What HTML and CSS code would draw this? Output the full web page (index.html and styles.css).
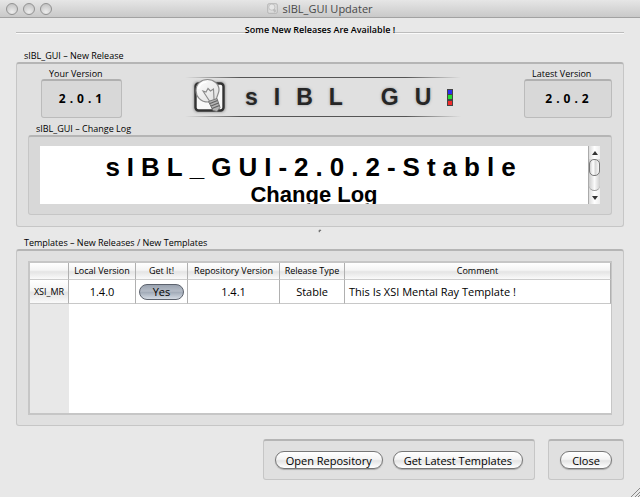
FILE: index.html
```html
<!DOCTYPE html>
<html lang="en">
<head>
<meta charset="utf-8">
<title>sIBL_GUI Updater</title>
<link rel="stylesheet" href="styles.css">
</head>
<body>
<div class="window">
  <header class="titlebar">
    <div class="lights">
      <button class="light" type="button" aria-label="Close window"></button>
      <button class="light" type="button" aria-label="Minimize window"></button>
      <button class="light" type="button" aria-label="Zoom window"></button>
    </div>
    <h1 class="title">
      <svg class="title-icon" viewBox="0 0 32 32" aria-hidden="true">
        <rect x="2" y="2" width="28" height="28" rx="4" fill="#dcdcdc" stroke="#b0b0b0" stroke-width="2.5"/>
        <circle cx="14" cy="12" r="9" fill="#e6e6e6" stroke="#b4b4b4" stroke-width="2"/>
        <path d="M17 20l6-4 4 8-5 4z" fill="#bcbcbc"/>
      </svg>
      <span>sIBL_GUI Updater</span>
    </h1>
  </header>

  <main class="content">
    <div class="notice"><span class="rule"></span><strong class="notice-text">Some New Releases Are Available !</strong><span class="rule"></span></div>

    <section class="group release">
      <h2 class="group-label">sIBL_GUI – New Release</h2>
      <div class="panel release-panel">
        <div class="banner-row">
          <div class="version">
            <div class="version-label">Your Version</div>
            <output class="version-box">2.0.1</output>
          </div>
          <div class="logo">
            <svg class="bulb" viewBox="0 0 38 38" aria-hidden="true">
              <defs>
                <linearGradient id="glass" x1="0" y1="0" x2="1" y2="1">
                  <stop offset="0" stop-color="#fff"/><stop offset="1" stop-color="#dedede"/>
                </linearGradient>
                <filter id="glow" x="-20%" y="-20%" width="140%" height="140%"><feGaussianBlur stdDeviation="1.5"/></filter>
              </defs>
              <rect x="3" y="4" width="31" height="30" rx="4" fill="#888" filter="url(#glow)"/>
              <rect x="4.500" y="5.500" width="28" height="27" rx="3" fill="#f8f8f8" stroke="#333" stroke-width="2.400"/>
              <path d="M17.500 24C9 24 5 18 5 12.500 5 6 10 1.500 16.500 1.500S28 6 28 12c0 4-2.500 6-2.500 9.500z" fill="url(#glass)" stroke="#8c8c8c" stroke-width="1.200"/>
              <path d="M7.500 11c1-4 4-7 8-7" fill="none" stroke="#fff" stroke-width="1.500"/>
              <path d="M18.500 23L12 13l3 1 2-3.500 2.500 2.500 3-2 .5 10" fill="none" stroke="#8a8a8a" stroke-width="1.100"/>
              <path d="M17.500 23.500l8.500-3 3 9-3 4-4-1z" fill="#b4b4b4" stroke="#777"/>
              <path d="M19 25.500l7.500-3M20 28l7.500-3M21 30.500l7.500-3" stroke="#606060" stroke-width="1.100"/>
            </svg>
            <span class="logo-text">sIBL GU</span>
            <svg class="rgb" viewBox="0 0 6 17" aria-hidden="true">
              <rect width="6" height="17" fill="#444"/>
              <rect x="1" y="1" width="4" height="4" fill="#2c2cf0"/>
              <rect x="1" y="6" width="4" height="4" fill="#25dc35"/>
              <rect x="1" y="12" width="4" height="4" fill="#f02c2c"/>
            </svg>
          </div>
          <div class="version version-latest">
            <div class="version-label">Latest Version</div>
            <output class="version-box">2.0.2</output>
          </div>
        </div>
        <h2 class="group-label">sIBL_GUI – Change Log</h2>
        <div class="panel log-panel">
          <div class="log">
            <article class="log-view" tabindex="0">
              <h3 class="log-title">sIBL_GUI-2.0.2-Stable</h3>
              <h4 class="log-subtitle">Change Log</h4>
            </article>
            <div class="scrollbar" aria-hidden="true">
              <span class="arrow arrow-up"></span>
              <span class="track"><span class="thumb"></span></span>
              <span class="arrow arrow-down"></span>
            </div>
          </div>
        </div>
      </div>
    </section>

    <div class="splitter"><svg class="grip" viewBox="0 0 4 4" aria-hidden="true"><circle cx="2" cy="2" r="1.500" fill="#777"/><path d="M2 4a2 2 0 0 1 2-2" stroke="#fff" fill="none"/></svg></div>

    <section class="group templates">
      <h2 class="group-label">Templates – New Releases / New Templates</h2>
      <div class="panel table-panel">
        <div class="table-frame">
          <table class="grid">
            <colgroup><col class="c-name"><col class="c-local"><col class="c-get"><col class="c-repo"><col class="c-type"><col></colgroup>
            <thead>
              <tr><td></td><th scope="col">Local Version</th><th scope="col">Get It!</th><th scope="col">Repository Version</th><th scope="col">Release Type</th><th scope="col">Comment</th></tr>
            </thead>
            <tbody>
              <tr><th scope="row">XSI_MR</th><td>1.4.0</td><td class="get"><button class="toggle" type="button" aria-pressed="true">Yes</button></td><td>1.4.1</td><td>Stable</td><td class="comment">This Is XSI Mental Ray Template !</td></tr>
            </tbody>
          </table>
          <div class="table-rest"><span class="gutter"></span></div>
        </div>
      </div>
    </section>

    <footer class="actions">
      <div class="panel action-panel">
        <button class="push" type="button">Open Repository</button>
        <button class="push" type="button">Get Latest Templates</button>
      </div>
      <div class="panel action-panel">
        <button class="push" type="button">Close</button>
      </div>
    </footer>
  </main>
  <svg class="resize" viewBox="0 0 10 10" aria-hidden="true"><path d="M1 10L10 1M5 10l5-5M8 10l2-2" stroke="#888" fill="none"/></svg>
</div>
</body>
</html>
```
FILE: styles.css
```css
* { box-sizing: border-box; }
body {
  margin: 0;
  background: #e8e8e8;
  color: #000;
  font: 9px/12px "Open Sans", "Noto Sans", sans-serif;
  font-weight: 500;
}
h1, h2, h3, h4 { margin: 0; font: inherit; }
button { font: inherit; color: inherit; margin: 0; }

.window { position: relative; display: flex; flex-direction: column; min-height: 100vh; }
.titlebar {
  position: relative;
  display: flex;
  align-items: center;
  justify-content: center;
  height: 18px;
  border-bottom: 1px solid #a2a2a2;
  background: linear-gradient(#e6e6e6, #c9c9c9);
}
.lights { position: absolute; left: 6px; top: 3px; display: flex; gap: 5px; }
.light {
  width: 12px;
  height: 12px;
  padding: 0;
  border: 1px solid #929292;
  border-radius: 50%;
  background: radial-gradient(circle at 50% 80%, #ededed, #bcbcbc);
}
.title { display: flex; align-items: center; gap: 4px; color: #484848; font-size: 11px; line-height: 16px; }
.title-icon { width: 11px; height: 11px; }

.content { flex: 1; display: flex; flex-direction: column; padding: 5px 16px 17px; }
.notice { display: flex; align-items: center; height: 13px; }
.notice-text { font-weight: 600; line-height: 12px; }
.rule { flex: 1; align-self: flex-end; height: 2px; margin-bottom: 2px; background: linear-gradient(#bcbcbc 50%, #fafafa 50%); }

.group { display: flex; flex-direction: column; }
.release { margin-top: 14px; }
.group-label { padding-left: 8px; }
.panel {
  border: 1px solid #c6c6c6;
  border-top: 2px solid #b5b5b5;
  border-radius: 3px;
  background: #e0e0e0;
}
.release-panel { padding: 4px 11px 11px; }
.banner-row { display: flex; justify-content: space-between; align-items: flex-start; padding-left: 13px; }
.version { width: 81px; }
.version-latest { width: 88px; }
.version-label { padding-left: 8px; line-height: 11px; }
.version-box {
  display: block;
  border: 1px solid #bbb;
  border-top: 2px solid #b0b0b0;
  border-radius: 3px;
  background: #d8d8d8;
  padding: 10px 0 11px 2px;
  font: 700 12px/15px "Noto Sans", sans-serif;
  letter-spacing: 4px;
  text-align: center;
}
.logo {
  display: flex;
  align-items: center;
  width: 276px;
  height: 40px;
  margin-top: 9px;
  padding-left: 6px;
  background:
    linear-gradient(90deg, transparent, #555 20%, #555 80%, transparent) top / 100% 1px no-repeat,
    linear-gradient(90deg, transparent, #555 20%, #555 80%, transparent) bottom / 100% 1px no-repeat;
}
.bulb { flex: none; width: 38px; height: 38px; margin-right: 16px; }
.logo-text {
  font: 700 23px/38px "Liberation Sans", sans-serif;
  letter-spacing: 16px;
  color: #262626;
  text-shadow: 0 0 3px #999;
  white-space: nowrap;
}
.rgb { flex: none; width: 6px; height: 17px; }

.release-panel > .group-label { margin-top: 5px; }
.log-panel { background: #d8d8d8; padding: 9px 11px 10px; }
.log { display: flex; height: 58px; background: #fff; }
.log-view {
  flex: 1;
  overflow-y: auto;
  scrollbar-width: none;
  padding-top: 6px;
  text-align: center;
  font-family: "Liberation Sans", sans-serif;
}
.log-title { font-weight: 700; font-size: 26px; line-height: 30px; letter-spacing: 7px; }
.log-subtitle { font-weight: 700; font-size: 22px; line-height: 26px; }
.scrollbar {
  display: flex;
  flex-direction: column;
  width: 12px;
  border-left: 1px solid #aaa;
  background: linear-gradient(90deg, #ddd, #fff 50%, #eee);
}
.arrow { height: 13px; display: flex; align-items: center; justify-content: center; }
.arrow::before { content: ""; border: 3px solid transparent; }
.arrow-up::before { border-bottom: 4px solid #333; border-top: 0; }
.arrow-down::before { border-top: 4px solid #333; border-bottom: 0; }
.track { flex: 1; border-bottom: 1px solid #999; border-radius: 0 0 6px 6px; background: linear-gradient(90deg, #ccc, #fafafa 50%, #ccc); }
.thumb {
  display: block;
  height: 17px;
  border: 1px solid #777;
  border-radius: 5px;
  background: linear-gradient(90deg, #d0d0d0, #fff 35%, #d8d8d8 60%, #f8f8f8);
}

.splitter { display: flex; justify-content: center; align-items: center; height: 7px; }
.grip { width: 4px; height: 4px; }

.templates { flex: 1; margin-top: 3px; }
.table-panel { flex: 1; display: flex; padding: 10px 11px; }
.table-frame {
  flex: 1;
  display: flex;
  flex-direction: column;
  border: 2px solid #c6c6c6;
  border-right-width: 1px;
  background: #fff;
}
.grid { width: 100%; table-layout: fixed; border-collapse: separate; border-spacing: 0; }
.c-name { width: 39px; }
.c-local { width: 67px; }
.c-get { width: 52px; }
.c-repo { width: 92px; }
.c-type { width: 65px; }
.grid th, .grid td { padding: 0; border-right: 1px solid #b0b0b0; white-space: nowrap; text-align: center; }
.grid thead th, .grid thead td {
  height: 17px;
  font-weight: 500;
  border-bottom: 1px solid #ccc;
  background: linear-gradient(#fff, #f4f4f4 45%, #e4e4e4 55%, #fafafa);
}
.grid tbody th { font-weight: 500; background: linear-gradient(#fff, #f4f4f4 45%, #e4e4e4 55%, #fafafa); }
.grid tbody th, .grid tbody td { height: 24px; border-bottom: 1px solid #c8c8c8; }
.grid tbody td { font-size: 11px; line-height: 14px; }
.grid .get { padding: 0 3px; }
.grid .comment { text-align: left; padding-left: 4px; }
.toggle {
  display: block;
  width: 100%;
  height: 16px;
  padding: 0;
  border: 1px solid #5c626d;
  border-radius: 8px;
  background: linear-gradient(#9aa3b0, #b5bcc7 45%, #a0a9b6 50%, #d4dbe4);
  font-size: 11px;
  line-height: 13px;
}
.table-rest { flex: 1; display: flex; }
.gutter { width: 39px; background: #e8e8e8; }

.actions { display: flex; justify-content: flex-end; gap: 13px; margin-top: 13px; }
.action-panel { display: flex; gap: 10px; padding: 10px 11px; }
.push {
  min-width: 52px;
  height: 18px;
  padding: 0 10px;
  border: 1px solid #777;
  border-radius: 9px;
  background: linear-gradient(#fff, #f4f4f4 45%, #e4e4e4 55%, #fff);
  box-shadow: 0 1px 1px #aaa;
  font-size: 11px;
  line-height: 15px;
  white-space: nowrap;
}
.resize { position: absolute; right: 0; bottom: 0; width: 10px; height: 10px; }
```
